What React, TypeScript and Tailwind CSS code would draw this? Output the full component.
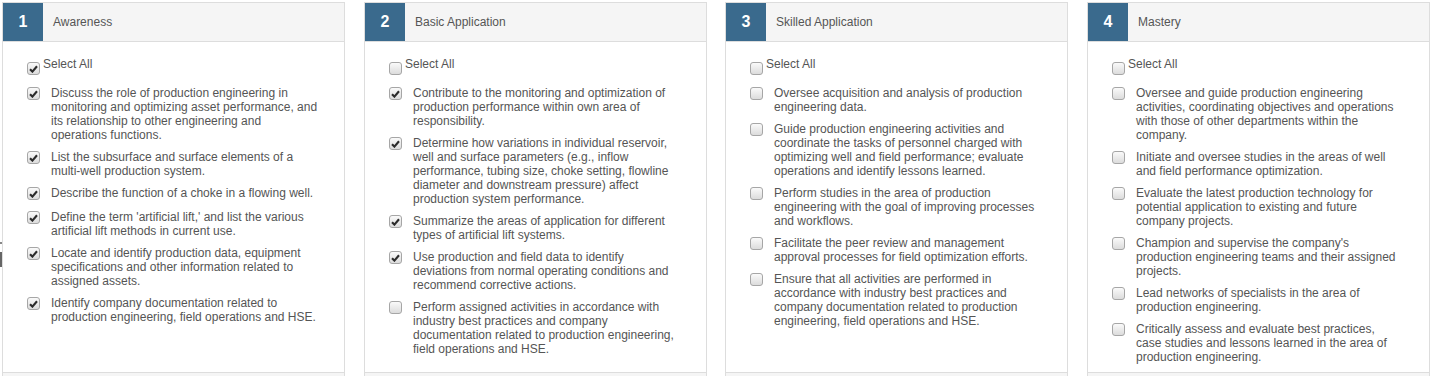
import React from "react";

interface Level {
  num: number;
  title: string;
  all: boolean;
  items: { text: string; checked: boolean }[];
}

const levels: Level[] = [
  {
    num: 1,
    title: "Awareness",
    all: true,
    items: [
      { text: "Discuss the role of production engineering in monitoring and optimizing asset performance, and its relationship to other engineering and operations functions.", checked: true },
      { text: "List the subsurface and surface elements of a multi-well production system.", checked: true },
      { text: "Describe the function of a choke in a flowing well.", checked: true },
      { text: "Define the term 'artificial lift,' and list the various artificial lift methods in current use.", checked: true },
      { text: "Locate and identify production data, equipment specifications and other information related to assigned assets.", checked: true },
      { text: "Identify company documentation related to production engineering, field operations and HSE.", checked: true },
    ],
  },
  {
    num: 2,
    title: "Basic Application",
    all: false,
    items: [
      { text: "Contribute to the monitoring and optimization of production performance within own area of responsibility.", checked: true },
      { text: "Determine how variations in individual reservoir, well and surface parameters (e.g., inflow performance, tubing size, choke setting, flowline diameter and downstream pressure) affect production system performance.", checked: true },
      { text: "Summarize the areas of application for different types of artificial lift systems.", checked: true },
      { text: "Use production and field data to identify deviations from normal operating conditions and recommend corrective actions.", checked: true },
      { text: "Perform assigned activities in accordance with industry best practices and company documentation related to production engineering, field operations and HSE.", checked: false },
    ],
  },
  {
    num: 3,
    title: "Skilled Application",
    all: false,
    items: [
      { text: "Oversee acquisition and analysis of production engineering data.", checked: false },
      { text: "Guide production engineering activities and coordinate the tasks of personnel charged with optimizing well and field performance; evaluate operations and identify lessons learned.", checked: false },
      { text: "Perform studies in the area of production engineering with the goal of improving processes and workflows.", checked: false },
      { text: "Facilitate the peer review and management approval processes for field optimization efforts.", checked: false },
      { text: "Ensure that all activities are performed in accordance with industry best practices and company documentation related to production engineering, field operations and HSE.", checked: false },
    ],
  },
  {
    num: 4,
    title: "Mastery",
    all: false,
    items: [
      { text: "Oversee and guide production engineering activities, coordinating objectives and operations with those of other departments within the company.", checked: false },
      { text: "Initiate and oversee studies in the areas of well and field performance optimization.", checked: false },
      { text: "Evaluate the latest production technology for potential application to existing and future company projects.", checked: false },
      { text: "Champion and supervise the company's production engineering teams and their assigned projects.", checked: false },
      { text: "Lead networks of specialists in the area of production engineering.", checked: false },
      { text: "Critically assess and evaluate best practices, case studies and lessons learned in the area of production engineering.", checked: false },
    ],
  },
];

// columns in the source sit on a fractional grid, so the spacing alternates
const offsets = ["", "ml-[19px]", "ml-[18px]", "ml-[19px]"];

function Box({ checked }: { checked: boolean }) {
  return (
    <span className="flex h-[13px] w-[13px] shrink-0 items-center justify-center rounded-[3px] border border-[#a6a6a6] bg-gradient-to-b from-[#fafafa] to-[#dcdcdc]">
      {checked && (
        <svg width="9" height="8" viewBox="0 0 9 8">
          <path d="M1 4.2 L3.4 6.6 L8 1.2" fill="none" stroke="#2b2b2b" strokeWidth="2.1" />
        </svg>
      )}
    </span>
  );
}

function Panel({ level, className }: { level: Level; className: string }) {
  return (
    <div className={`flex h-[380px] w-[343px] shrink-0 flex-col border border-[#dddddd] bg-white ${className}`}>
      <div className="flex h-[39px] items-stretch border-b border-[#dddddd] bg-[#f5f5f5]">
        <div className="flex w-[40px] items-center justify-center bg-[#3a6a8d] text-[16px] font-bold text-white">
          {level.num}
        </div>
        <div className="flex items-center pl-[10px] text-[12px] text-[#555]">{level.title}</div>
      </div>
      <div className="h-[330px] pl-[24px] pr-[26px] pt-[15px] text-[12px] leading-[14px] text-[#555]">
        <div className="flex items-start">
          <span className="mt-[5px] mr-[3px]">
            <Box checked={level.all} />
          </span>
          <span>Select All</span>
        </div>
        <div className="mt-[11px] flex flex-col gap-[8px]">
          {level.items.map((it, i) => (
            <div key={i} className="flex min-h-[16px] items-start">
              <span className="mt-[1px] mr-[11px]">
                <Box checked={it.checked} />
              </span>
              <span>{it.text}</span>
            </div>
          ))}
        </div>
      </div>
      <div className="flex-1 border-t border-[#dddddd] bg-[#f5f5f5]" />
    </div>
  );
}

export default function App() {
  return (
    <div
      className="relative h-[376px] w-[1432px] overflow-hidden bg-white"
      style={{ fontFamily: '"Liberation Sans", Arial, sans-serif' }}
    >
      <div className="absolute left-0 top-[242px] h-[2px] w-[2px] bg-[#888]" />
      <div className="absolute left-0 top-[252px] h-[15px] w-[2px] bg-[#666]" />
      <div className="flex pl-[2px] pt-[2px]">
        {levels.map((l, i) => (
          <Panel key={l.num} level={l} className={offsets[i]} />
        ))}
      </div>
    </div>
  );
}
